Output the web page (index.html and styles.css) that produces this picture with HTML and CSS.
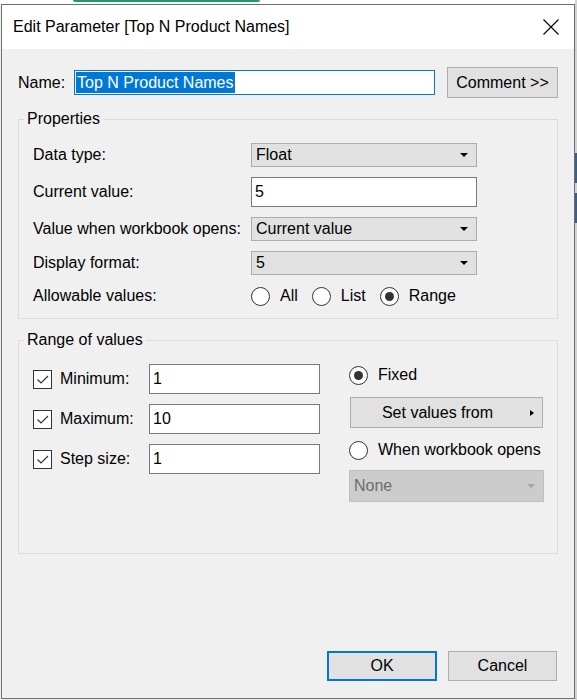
FILE: index.html
```html
<!DOCTYPE html>
<html>
<head>
    <meta charset="UTF-8">
    <link rel="stylesheet" href="styles.css">
</head>
<body>
    <div class="desktop-top"><span class="app-tab"></span></div>
    <div class="side-tabs"><span class="tab-a"></span><span class="tab-b"></span></div>

    <div class="dialog">
        <div class="titlebar">
            <span class="title">Edit Parameter [Top N Product Names]</span>
            <svg class="close" width="16" height="16" viewBox="0 0 16 16">
                <path d="M0.5 0.5 L15.5 15.5 M15.5 0.5 L0.5 15.5" stroke="#000" stroke-width="1.1" fill="none"/>
            </svg>
        </div>

        <div class="content">
            <div class="name-row">
                <span class="name-label">Name:</span>
                <div class="name-input"><span class="selected">Top N Product Names</span></div>
                <button class="btn comment">Comment &gt;&gt;</button>
            </div>

            <fieldset class="group props">
                <legend>Properties</legend>
                <div class="prop-grid">
                    <span class="lbl">Data type:</span>
                    <div class="select">Float<i class="caret"></i></div>

                    <span class="lbl">Current value:</span>
                    <div class="textbox">5</div>

                    <span class="lbl">Value when workbook opens:</span>
                    <div class="select">Current value<i class="caret"></i></div>

                    <span class="lbl">Display format:</span>
                    <div class="select">5<i class="caret"></i></div>

                    <span class="lbl">Allowable values:</span>
                    <div class="radios">
                        <span class="radio"><i class="dot"></i>All</span>
                        <span class="radio"><i class="dot"></i>List</span>
                        <span class="radio on"><i class="dot"></i>Range</span>
                    </div>
                </div>
            </fieldset>

            <fieldset class="group range">
                <legend>Range of values</legend>
                <div class="range-cols">
                    <div class="limits">
                        <div class="limit-row">
                            <span class="check"><svg width="17" height="17" viewBox="0 0 17 17"><path d="M3.5 8.5 L7 12 L14 5" stroke="#333" stroke-width="1.2" fill="none"/></svg></span>
                            <span class="limit-label">Minimum:</span>
                            <div class="textbox small">1</div>
                        </div>
                        <div class="limit-row">
                            <span class="check"><svg width="17" height="17" viewBox="0 0 17 17"><path d="M3.5 8.5 L7 12 L14 5" stroke="#333" stroke-width="1.2" fill="none"/></svg></span>
                            <span class="limit-label">Maximum:</span>
                            <div class="textbox small">10</div>
                        </div>
                        <div class="limit-row">
                            <span class="check"><svg width="17" height="17" viewBox="0 0 17 17"><path d="M3.5 8.5 L7 12 L14 5" stroke="#333" stroke-width="1.2" fill="none"/></svg></span>
                            <span class="limit-label">Step size:</span>
                            <div class="textbox small">1</div>
                        </div>
                    </div>

                    <div class="source">
                        <span class="radio on"><i class="dot"></i>Fixed</span>
                        <button class="btn set-from"><span>Set values from</span><i class="arrow"></i></button>
                        <span class="radio opens"><i class="dot"></i>When workbook opens</span>
                        <div class="select disabled">None<i class="caret"></i></div>
                    </div>
                </div>
            </fieldset>

            <div class="actions">
                <button class="btn ok">OK</button>
                <button class="btn cancel">Cancel</button>
            </div>
        </div>
    </div>
</body>
</html>
```

FILE: styles.css
```css
* {
    margin: 0;
    padding: 0;
    box-sizing: border-box;
}

body {
    width: 577px;
    height: 700px;
    overflow: hidden;
    position: relative;
    background: #f0f0f0;
    font-family: "Liberation Sans", Arial, sans-serif;
    font-size: 16px;
    line-height: 20px;
    color: #000;
}

/* bits of the app behind the dialog */
.desktop-top {
    height: 4px;
    background: #fff;
    position: relative;
}

.app-tab {
    position: absolute;
    left: 73px;
    top: 0;
    width: 187px;
    height: 2px;
    background: #1e9b6b;
    border-radius: 0 0 3px 3px;
}

.side-tabs {
    position: absolute;
    left: 575px;
    top: 0;
    width: 2px;
    height: 700px;
    background: #d2d2d2;
}

.side-tabs span {
    position: absolute;
    left: 0;
    width: 2px;
    height: 30px;
    background: #3b5f82;
}

.tab-a { top: 153px; }
.tab-b { top: 193px; }

/* dialog window */
.dialog {
    position: absolute;
    left: 1px;
    top: 4px;
    width: 574px;
    height: 695px;
    border: 1px solid #6f6f6f;
    background: #f0f0f0;
    display: flex;
    flex-direction: column;
}

.titlebar {
    height: 44px;
    flex-shrink: 0;
    background: #fff;
    display: flex;
    align-items: center;
    justify-content: space-between;
    padding: 0 15px 0 11px;
}

.title {
    font-size: 16px;
}

.close {
    display: block;
}

.content {
    flex: 1;
    display: flex;
    flex-direction: column;
    padding: 0 16px 17px 16px;
}

/* name row */
.name-row {
    margin-top: 18px;
    height: 31px;
    display: flex;
    align-items: center;
}

.name-label {
    width: 56px;
}

.name-input {
    width: 361px;
    height: 25px;
    background: #fff;
    border: 1px solid #0078d7;
    padding: 1px 1px;
    display: flex;
    align-items: center;
}

.selected {
    background: #0078d7;
    color: #fff;
    line-height: 21px;
    padding: 0 1px;
}

.btn {
    font-family: inherit;
    font-size: 16px;
    color: #000;
    background: #e1e1e1;
    border: 1px solid #adadad;
    height: 31px;
}

.comment {
    width: 111px;
    margin-left: 12px;
}

/* group boxes */
.group {
    border: 1px solid #dcdcdc;
    width: 540px;
    padding: 14px 0 11px 14px;
    margin-top: 11px;
}

.group legend {
    font-size: 16px;
    line-height: 20px;
    padding: 0 3px;
    margin-left: -9px;
}

.prop-grid {
    display: grid;
    grid-template-columns: 218px 226px;
    grid-template-rows: 24px 30px 24px 24px 22px;
    row-gap: 10px;
    align-items: center;
}

.select {
    height: 24px;
    background: #e1e1e1;
    border: 1px solid #adadad;
    padding: 0 8px 0 4px;
    display: flex;
    align-items: center;
    justify-content: space-between;
}

.caret {
    width: 0;
    height: 0;
    border-left: 4px solid transparent;
    border-right: 4px solid transparent;
    border-top: 4px solid #000;
}

.textbox {
    height: 30px;
    background: #fff;
    border: 1px solid #7a7a7a;
    padding: 0 3px;
    display: flex;
    align-items: center;
}

.radios {
    display: flex;
    gap: 14px;
}

.radio {
    display: inline-flex;
    align-items: center;
    gap: 10px;
}

.dot {
    width: 19px;
    height: 19px;
    border: 1px solid #333;
    border-radius: 50%;
    background: #fff;
    display: flex;
    align-items: center;
    justify-content: center;
}

.radio.on .dot::after {
    content: "";
    width: 9px;
    height: 9px;
    border-radius: 50%;
    background: #333;
}

/* range of values */
.range {
    margin-top: 11px;
    padding-bottom: 51px;
}

.range-cols {
    display: flex;
}

.limits {
    display: flex;
    flex-direction: column;
    gap: 10px;
}

.limit-row {
    height: 30px;
    display: flex;
    align-items: center;
}

.check {
    width: 19px;
    height: 19px;
    border: 1px solid #333;
    background: #fff;
    display: flex;
    align-items: center;
    justify-content: center;
}

.limit-label {
    width: 89px;
    margin-left: 8px;
}

.textbox.small {
    width: 171px;
}

.source {
    margin-left: 29px;
    width: 195px;
    display: flex;
    flex-direction: column;
}

.source .radio {
    height: 22px;
}

.set-from {
    margin: 11px 0 0 1px;
    width: 193px;
    display: flex;
    align-items: center;
    padding: 0 8px 0 0;
}

.set-from span {
    flex: 1;
    text-align: center;
}

.arrow {
    width: 0;
    height: 0;
    margin-left: 6px;
    border-top: 3px solid transparent;
    border-bottom: 3px solid transparent;
    border-left: 4px solid #000;
}

.radio.opens {
    margin-top: 11px;
}

.select.disabled {
    margin-top: 9px;
    height: 32px;
    background: #cccccc;
    border-color: #bfbfbf;
    color: #6d6d6d;
}

.select.disabled .caret {
    border-top-color: #a6a6a6;
}

/* bottom buttons */
.actions {
    margin-top: auto;
    display: flex;
    justify-content: flex-end;
    gap: 11px;
    padding-right: 1px;
}

.ok {
    width: 110px;
    height: 30px;
    border: 2px solid #0078d7;
}

.cancel {
    width: 109px;
    height: 30px;
}
```
